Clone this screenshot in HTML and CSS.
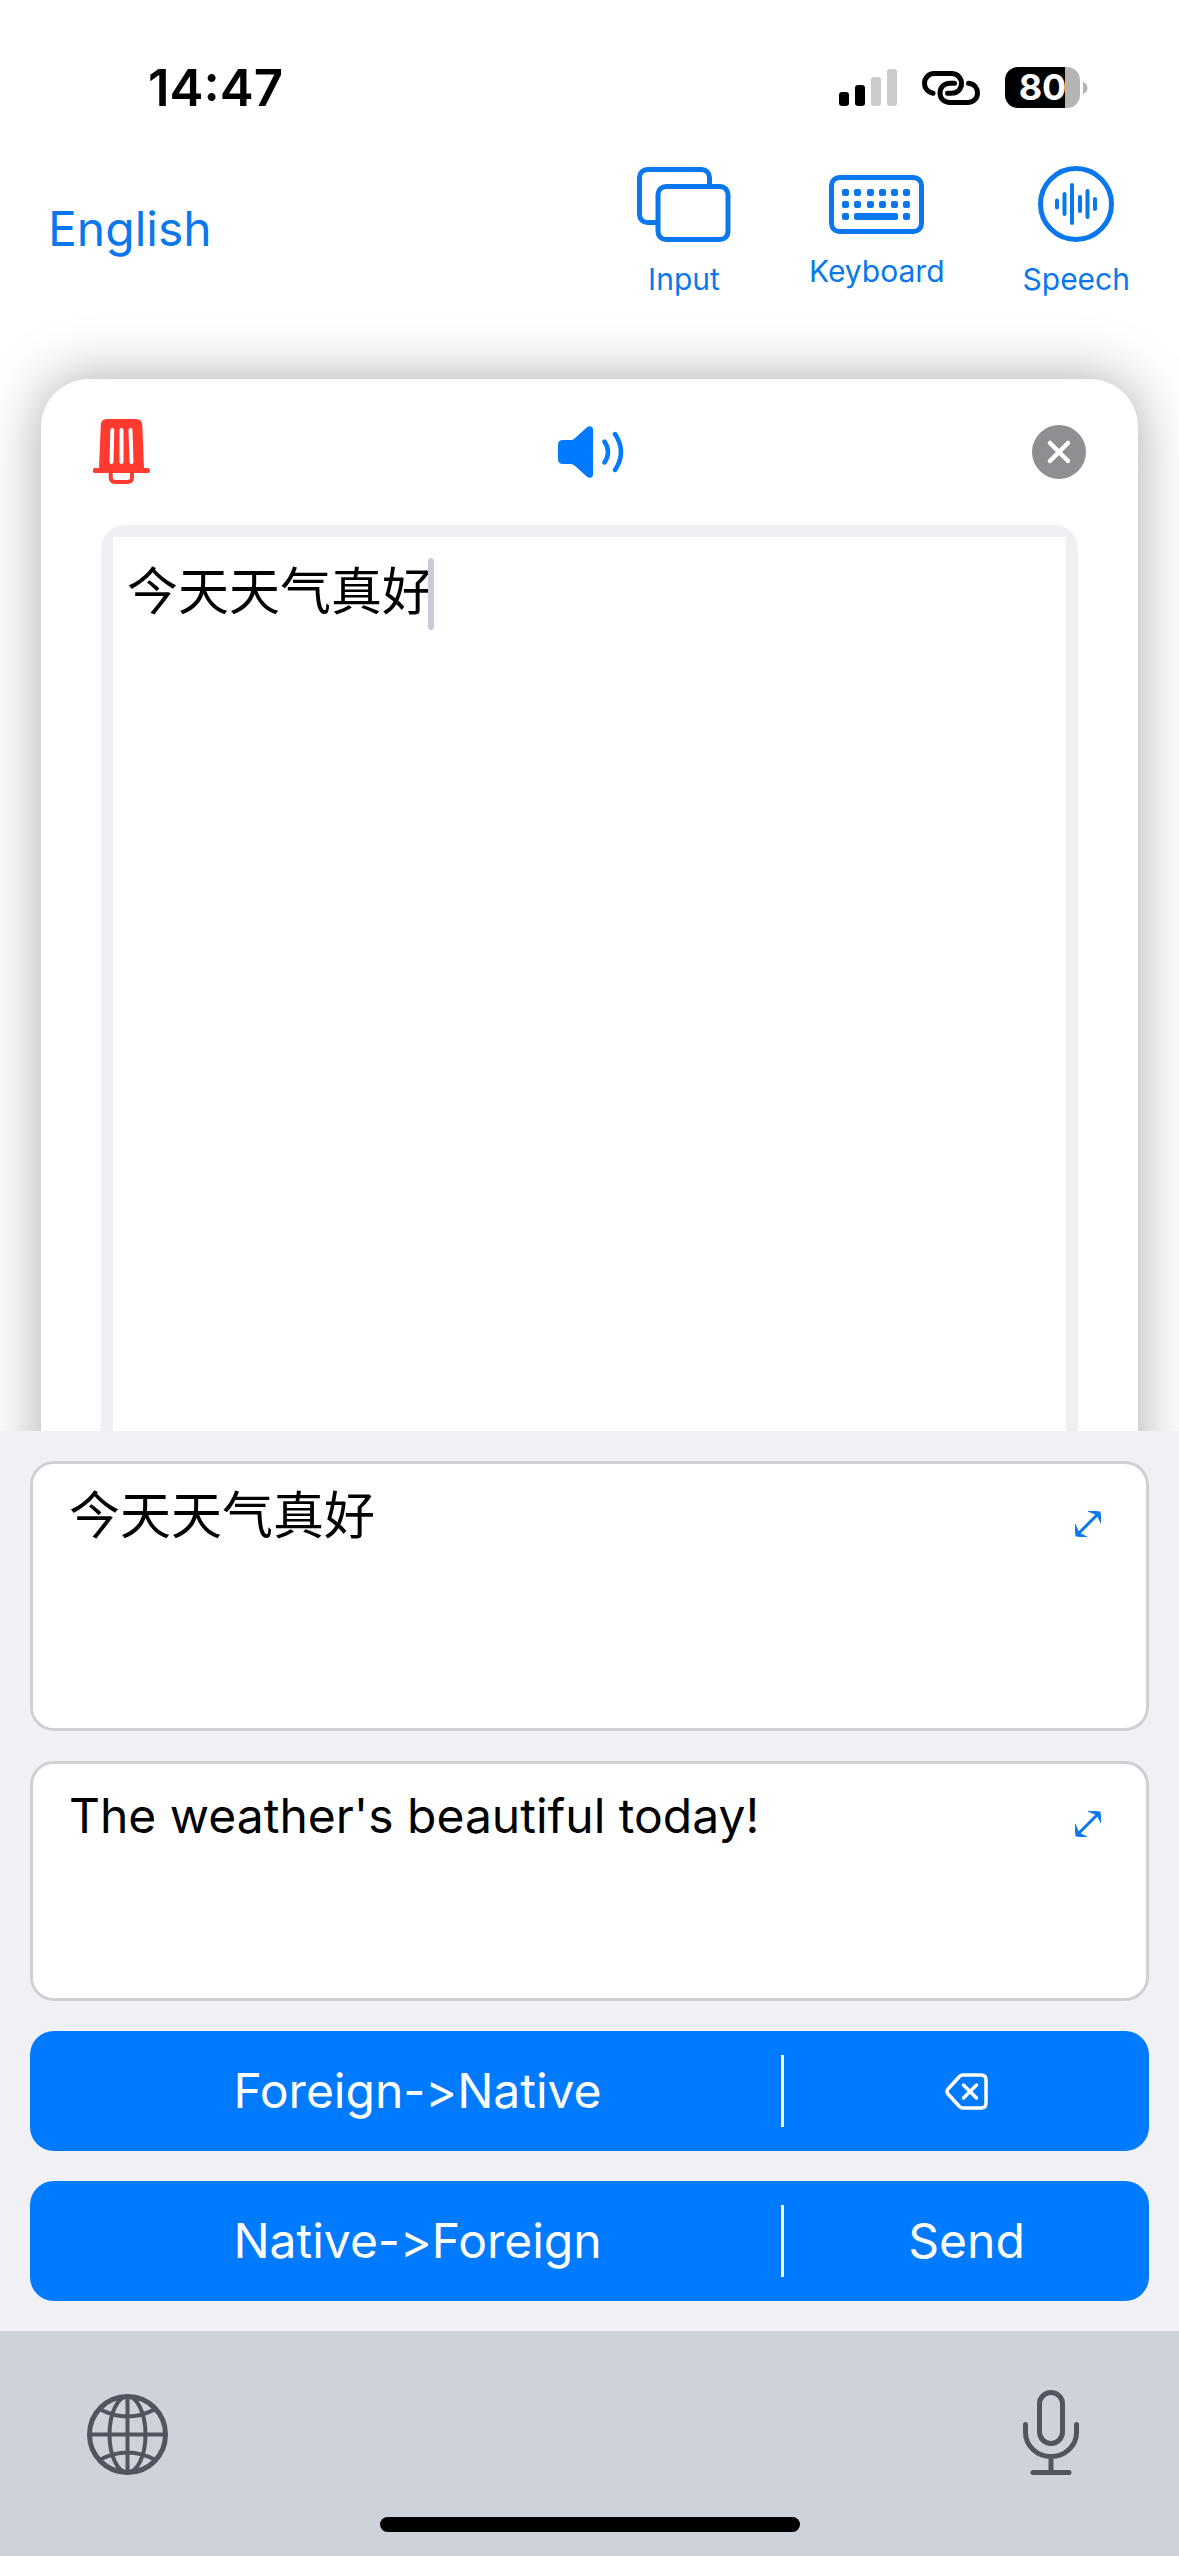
FILE: index.html
```html
<!DOCTYPE html>
<html lang="en">
<head>
<meta charset="utf-8">
<meta name="viewport" content="width=device-width, initial-scale=1">
<title>Translator</title>
<link rel="stylesheet" href="styles.css">
</head>
<body>
<div class="status">
  <span class="clock">14:47</span>
  <div class="indicators">
    <svg width="58" height="38" viewBox="0 0 58 38" aria-hidden="true">
      <rect x="0" y="23" width="10" height="14" rx="3"/>
      <rect x="16" y="16" width="10" height="21" rx="3"/>
      <rect x="32" y="8" width="10" height="29" rx="3" fill="#cbcbcb"/>
      <rect x="48" y="0" width="10" height="37" rx="3" fill="#cbcbcb"/>
    </svg>
    <svg width="58" height="34" viewBox="0 0 58 34" fill="none" stroke="#000" stroke-width="5" stroke-linecap="round" aria-hidden="true">
      <path d="M11 22.3C5.500 21 2.500 17 2.500 12.500C2.500 7 6.500 2.500 12 2.500H29.500C35.500 2.500 39.500 7 39.500 12.500C39.500 18 35.500 22.300 29.500 22.300H25.500"/>
      <path d="M32.500 12.300H28C22 12.300 18 16.500 18 22C18 27.500 22 31.500 28 31.500H45.500C51.500 31.500 55.500 27.500 55.500 22C55.500 17 52.500 13 46.500 12.300"/>
    </svg>
    <div class="battery">
      <span class="battery-level">80</span>
      <svg width="5" height="12" viewBox="0 0 5 12" aria-hidden="true"><path d="M0 0C6 2 6 10 0 12Z" fill="#b4b4b4"/></svg>
    </div>
  </div>
</div>

<header class="toolbar">
  <button class="language" type="button">English</button>
  <nav class="modes">
    <button class="mode" type="button">
      <svg width="94" height="75" viewBox="0 0 94 75" fill="none" stroke="currentColor" stroke-width="5" aria-hidden="true">
        <path d="M72.500 18V10.500A8 8 0 0 0 64.500 2.500H10.500A8 8 0 0 0 2.500 10.500V47.500A8 8 0 0 0 10.500 55.500H19"/>
        <rect x="21" y="19.500" width="70" height="53" rx="8"/>
      </svg>
      <span>Input</span>
    </button>
    <button class="mode" type="button">
      <svg width="95" height="59" viewBox="0 0 95 59" fill="currentColor" aria-hidden="true">
        <rect x="2.500" y="2.500" width="90" height="54" rx="8" fill="none" stroke="currentColor" stroke-width="5"/>
        <g>
          <rect x="13" y="14" width="7" height="7" rx="2"/><rect x="25" y="14" width="7" height="7" rx="2"/><rect x="38" y="14" width="7" height="7" rx="2"/><rect x="50" y="14" width="7" height="7" rx="2"/><rect x="62" y="14" width="7" height="7" rx="2"/><rect x="74" y="14" width="7" height="7" rx="2"/>
          <rect x="13" y="26" width="7" height="7" rx="2"/><rect x="25" y="26" width="7" height="7" rx="2"/><rect x="38" y="26" width="7" height="7" rx="2"/><rect x="50" y="26" width="7" height="7" rx="2"/><rect x="62" y="26" width="7" height="7" rx="2"/><rect x="74" y="26" width="7" height="7" rx="2"/>
          <rect x="13" y="38" width="7" height="7" rx="2"/><rect x="25" y="38" width="44" height="7" rx="2"/><rect x="74" y="38" width="7" height="7" rx="2"/>
        </g>
      </svg>
      <span>Keyboard</span>
    </button>
    <button class="mode" type="button">
      <svg width="76" height="76" viewBox="0 0 76 76" fill="none" stroke="currentColor" stroke-width="4" stroke-linecap="round" aria-hidden="true">
        <circle cx="38" cy="38" r="35.500" stroke-width="5"/>
        <path d="M19 34.500V41.500M26.500 28V48M34 19V57M42 31V45M49.500 25V51M57 33V43"/>
      </svg>
      <span>Speech</span>
    </button>
  </nav>
</header>

<main class="stage">
  <section class="card">
    <div class="card-tools">
      <button class="tool trash" type="button" aria-label="Clear text">
        <svg width="57" height="65" viewBox="0 0 57 65" aria-hidden="true">
          <path d="M14 0H43Q49 0 49.300 6L51 49H54.500A2.300 2.300 0 0 1 54.500 54H2.300A2.300 2.300 0 0 1 2.300 49H6L7.800 6Q8 0 14 0Z" fill="currentColor"/>
          <path d="M17.700 53V58.500Q17.700 63 22 63H34.500Q39 63 39 58.500V53" fill="none" stroke="currentColor" stroke-width="4"/>
          <path d="M19.300 11L18.500 43M28.500 11V43M37.500 11L38.500 43" stroke="#fff" stroke-width="4" stroke-linecap="round"/>
        </svg>
      </button>
      <button class="tool speaker" type="button" aria-label="Read aloud">
        <svg width="67" height="52" viewBox="0 0 67 52" aria-hidden="true">
          <path d="M5 14H13Q15 14 16.500 12.500L29 1.300Q31 -.3 33 .4Q35 1 35 3.500V48.500Q35 51 33 51.600Q31 52.300 29 50.700L16.500 39.500Q15 38 13 38H5Q0 38 0 33V19Q0 14 5 14Z" fill="currentColor"/>
          <path d="M46.500 15.500Q53.500 26 46.500 36.500M57 8Q69 26 57 44" fill="none" stroke="currentColor" stroke-width="4.500" stroke-linecap="round"/>
        </svg>
      </button>
      <button class="tool close" type="button" aria-label="Close">
        <svg width="54" height="54" viewBox="0 0 54 54" aria-hidden="true">
          <circle cx="27" cy="27" r="27" fill="currentColor"/>
          <path d="M18 18L36 36M36 18L18 36" stroke="#fff" stroke-width="4.500" stroke-linecap="round"/>
        </svg>
      </button>
    </div>
    <div class="editor">
      <textarea class="text" aria-label="Text" lang="zh-CN">今天天气真好</textarea>
      <span class="caret"></span>
    </div>
  </section>
</main>

<section class="panel">
  <div class="field source">
    <textarea class="text" aria-label="Foreign text" lang="zh-CN">今天天气真好</textarea>
    <button class="expand" type="button" aria-label="Expand foreign text">
      <svg width="26" height="26" viewBox="0 0 26 26" fill="currentColor" aria-hidden="true">
        <path d="M3 23L23 3" stroke="currentColor" stroke-width="3"/>
        <path d="M13 0L25 1L26 12L22 4Z M0 13L1 25L12 26L4 22Z" stroke="currentColor" stroke-width="1"/>
      </svg>
    </button>
  </div>
  <div class="field target">
    <textarea class="text" aria-label="Native text">The weather's beautiful today!</textarea>
    <button class="expand" type="button" aria-label="Expand native text">
      <svg width="26" height="26" viewBox="0 0 26 26" fill="currentColor" aria-hidden="true">
        <path d="M3 23L23 3" stroke="currentColor" stroke-width="3"/>
        <path d="M13 0L25 1L26 12L22 4Z M0 13L1 25L12 26L4 22Z" stroke="currentColor" stroke-width="1"/>
      </svg>
    </button>
  </div>
  <div class="actions">
    <button class="action translate" type="button">Foreign-&gt;Native</button>
    <span class="divider"></span>
    <button class="action" type="button" aria-label="Delete">
      <svg width="43" height="37" viewBox="0 0 43 37" fill="none" stroke="currentColor" stroke-width="3.500" stroke-linecap="round" stroke-linejoin="round" aria-hidden="true">
        <path d="M18 2H36Q41 2 41 7V30Q41 35 36 35H18Q16 35 14.500 33.500L3 21Q1 18.500 3 16L14.500 3.500Q16 2 18 2Z"/>
        <path d="M18.500 12L31.500 25M31.500 12L18.500 25"/>
      </svg>
    </button>
  </div>
  <div class="actions">
    <button class="action translate" type="button">Native-&gt;Foreign</button>
    <span class="divider"></span>
    <button class="action" type="button">Send</button>
  </div>
</section>

<footer class="dock">
  <div class="dock-keys">
    <button class="key" type="button" aria-label="Next keyboard">
      <svg width="81" height="81" viewBox="0 0 81 81" fill="none" stroke="currentColor" stroke-width="4" aria-hidden="true">
        <circle cx="40.500" cy="40.500" r="38" stroke-width="5"/>
        <ellipse cx="40.500" cy="40.500" rx="18" ry="38"/>
        <path d="M40.500 3V78M3 40.500H78M12.500 15Q40.500 30 68.500 15M12.500 66Q40.500 51 68.500 66"/>
      </svg>
    </button>
    <button class="key" type="button" aria-label="Dictate">
      <svg width="56" height="85" viewBox="0 0 56 85" fill="none" stroke="currentColor" stroke-width="5" stroke-linecap="round" aria-hidden="true">
        <rect x="16.500" y="2.500" width="23" height="51" rx="11.500"/>
        <path d="M2.500 34.500V42.500A25.500 24 0 0 0 53.500 42.500V34.500M28 67V82M10 82.500H46"/>
      </svg>
    </button>
  </div>
  <div class="home-bar"></div>
</footer>
</body>
</html>
```
FILE: styles.css
```css
* {
  box-sizing: border-box;
}

body {
  margin: 0;
  min-height: 100vh;
  display: flex;
  flex-direction: column;
  background: #fff;
  color: #000;
  font-family: Inter, "Noto Sans CJK SC", sans-serif;
}

button {
  margin: 0;
  padding: 0;
  border: 0;
  background: none;
  color: inherit;
  font: inherit;
}

svg {
  display: block;
  flex: none;
}

/* Status bar */
.status {
  display: flex;
  align-items: center;
  justify-content: space-between;
  padding: 67px 91px 58px 148px;
}

.clock {
  font-size: 51px;
  line-height: 41px;
  font-weight: 600;
}

.indicators {
  display: flex;
  align-items: center;
  gap: 25px;
}

.battery {
  display: flex;
  align-items: center;
  gap: 3px;
}

.battery-level {
  width: 75px;
  border-radius: 13px;
  background: linear-gradient(to right, #000 60px, #b4b4b4 60px);
  color: #fff;
  font-size: 36px;
  line-height: 41px;
  font-weight: 700;
  text-align: center;
}

/* Toolbar */
.toolbar {
  display: flex;
  align-items: center;
  justify-content: space-between;
  padding: 0 49px 0 48px;
  color: #0a78ec;
}

.language {
  padding-bottom: 6px;
  font-size: 48px;
  line-height: 60px;
}

.modes {
  display: flex;
  align-items: center;
  gap: 78px;
}

.mode {
  display: flex;
  flex-direction: column;
  align-items: center;
  gap: 19px;
  font-size: 30px;
  line-height: 36px;
}

/* Card */
.stage {
  flex: 1;
  display: flex;
  flex-direction: column;
  padding: 82px 41px 0;
}

/* The card runs on underneath the keyboard panel */
.card {
  flex: 1;
  display: flex;
  flex-direction: column;
  margin-bottom: -80px;
  padding: 40px 60px 0;
  border-radius: 48px 48px 0 0;
  background: #fff;
  box-shadow: 0 0 60px rgba(0, 0, 0, 0.34);
}

.card-tools {
  display: flex;
  align-items: center;
  justify-content: space-between;
  height: 65px;
  margin: 0 -8px 41px;
}

.trash {
  color: #ff3b30;
}

.speaker {
  color: #007aff;
}

.close {
  color: #8e8e93;
}

.editor {
  flex: 1;
  display: flex;
  position: relative;
  min-height: 600px;
  padding: 12px 12px 0;
  border-radius: 24px 24px 0 0;
  background: #f0f0f4;
}

.text {
  flex: 1;
  min-width: 0;
  margin: 0;
  border: 0;
  border-radius: 0;
  outline: 0;
  resize: none;
  background: #fff;
  color: #000;
  font: inherit;
  font-size: 48px;
  line-height: 60px;
}

.text:lang(zh-CN) {
  font-size: 51px;
}

.editor .text {
  padding: 25px 14px;
}

.caret {
  position: absolute;
  top: 33px;
  left: 327px;
  width: 6px;
  height: 72px;
  border-radius: 3px;
  background: #cbcad8;
}

/* Keyboard panel */
.panel {
  position: relative;
  display: flex;
  flex-direction: column;
  gap: 30px;
  padding: 30px;
  background: #f0f0f5;
}

.field {
  display: flex;
  align-items: flex-start;
  border: 3px solid #cfd0d5;
  border-radius: 24px;
  background: #fff;
  overflow: hidden;
}

.field .text {
  align-self: stretch;
  padding: 22px 36px;
}

.source {
  height: 270px;
}

.target {
  height: 240px;
}

.expand {
  padding: 47px 45px 20px;
  color: #0a78ec;
}

.actions {
  display: grid;
  grid-template-columns: 751fr 3px 365fr;
  align-items: center;
  height: 120px;
  border-radius: 24px;
  background: #007aff;
  color: #fff;
  font-size: 48px;
  line-height: 60px;
  font-feature-settings: "calt" 0;
}

.action {
  display: flex;
  align-items: center;
  justify-content: center;
  height: 100%;
  font-feature-settings: inherit;
}

.translate {
  padding-left: 24px;
}

.divider {
  height: 72px;
  background: #fff;
}

/* System dock */
.dock {
  position: relative;
  display: flex;
  flex-direction: column;
  align-items: center;
  gap: 42px;
  padding: 59px 0 24px;
  background: #ced2db;
  color: #50555e;
}

.dock-keys {
  align-self: stretch;
  display: flex;
  align-items: flex-end;
  justify-content: space-between;
  padding: 0 100px 0 87px;
}

.home-bar {
  width: 420px;
  height: 15px;
  border-radius: 8px;
  background: #000;
}
```
